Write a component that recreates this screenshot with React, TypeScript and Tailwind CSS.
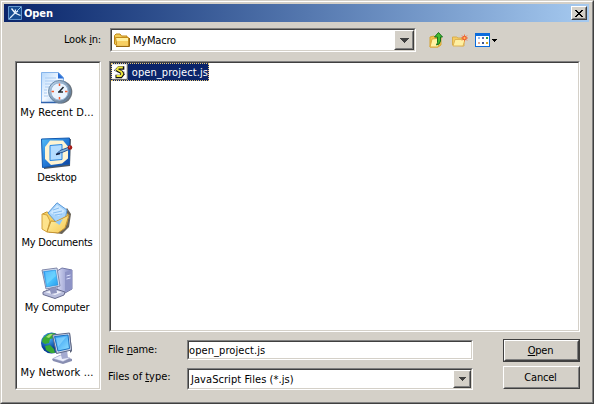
import React, { ReactNode, useState } from "react";

type Place = { label: string; icon: ReactNode; spacing: string };

function RecentIcon() {
  return (
    <svg width="33" height="32" viewBox="0 0 33 32">
      <defs>
        <linearGradient id="sheet" x1="0" y1="0" x2="1" y2="1">
          <stop offset="0" stopColor="#b5d8fc" />
          <stop offset="0.5" stopColor="#f4f9ff" />
          <stop offset="1" stopColor="#7db4ee" />
        </linearGradient>
        <linearGradient id="rim" x1="0" y1="0" x2="1" y2="1">
          <stop offset="0" stopColor="#c4dcf2" />
          <stop offset="1" stopColor="#56697f" />
        </linearGradient>
      </defs>
      <path d="M0.5 0.5h17l5 5v25H0.5z" fill="url(#sheet)" stroke="#86b4ea" />
      <path d="M17 0.5v6h6z" fill="#2b6fd6" />
      <path d="M4 6h11M4 9h12M4 12h7M4 15h4M3 18h3M3 21h3M3 24h4" stroke="#a9cbf2" />
      <path d="M0 30.5h21" stroke="#2f63ad" strokeWidth="1.5" />
      <circle cx="19.8" cy="20" r="11.5" fill="#6b737c" />
      <circle cx="18.5" cy="19.5" r="11" fill="url(#rim)" stroke="#6888a8" />
      <circle cx="18.5" cy="19.5" r="8.7" fill="#e9f4ff" stroke="#8fb2d4" />
      <path d="M18.5 11.5v2.500M18.5 25v2.500M10.500 19.500h2.500M24 19.500h2.500" stroke="#ef5b30" strokeWidth="1.500" />
      <path d="M22.500 15L18.500 19.500M22 20h-5" stroke="#202830" strokeWidth="1.500" fill="none" />
    </svg>
  );
}

function DesktopIcon() {
  return (
    <svg width="33" height="32" viewBox="0 0 33 32">
      <defs>
        <linearGradient id="desk" x1="0" y1="0" x2="1" y2="1">
          <stop offset="0" stopColor="#54bdf8" />
          <stop offset="0.5" stopColor="#247bd8" />
          <stop offset="1" stopColor="#0c3f9b" />
        </linearGradient>
      </defs>
      <path d="M3 3l27-1-1 27-26 3z" fill="#4d5865" />
      <path d="M0.500 2L28.500 1v26L1.500 30.500z" fill="url(#desk)" stroke="#1459ae" />
      <path d="M9 3.500h13l5 6v12l-6 5-11 1.500-6-6V10z" fill="#fff4d2" />
      <path d="M9 8.500l12-1v15l-12 1z" fill="#b4dcff" stroke="#2686e4" />
      <path d="M16 16.500l3-3 8-3 1 2-7 3z" fill="#81afd8" stroke="#27579b" />
      <path d="M15 17.500l4-1" stroke="#111c3c" strokeWidth="1.500" />
      <circle cx="29" cy="10.500" r="2.300" fill="#a51c18" />
      <circle cx="28.500" cy="10" r="0.700" fill="#ef7364" />
    </svg>
  );
}

function DocumentsIcon() {
  return (
    <svg width="33" height="32" viewBox="0 0 33 32">
      <defs>
        <linearGradient id="flap" x1="0" y1="0" x2="1" y2="1">
          <stop offset="0" stopColor="#fff6ae" />
          <stop offset="1" stopColor="#f6c650" />
        </linearGradient>
      </defs>
      <path d="M7 30l14 2 7-7 2-13-4-6z" fill="#6a6458" />
      <path d="M1.500 12l4-2 4 1 14-2 4 4-2 10-17 7-6-3z" fill="#f6cf60" stroke="#c09430" />
      <path d="M7 11L16 0.800 26 8l-2 10-9 2z" fill="#a8d4fb" stroke="#5b99d8" />
      <path d="M9 11l7-8 8 6-6 5z" fill="#cde8ff" />
      <path d="M12 8l6-2M12 11l9-2M14 13l7-1" stroke="#86bcf0" />
      <path d="M1 12l5 1 3 6-3 11-5-3z" fill="#fde38c" stroke="#d3a23c" />
      <path d="M6 30l4-11 5 0.500L28 13l-4 13-7 5z" fill="url(#flap)" stroke="#c69431" />
      <path d="M14 20l8-3-3.500 6z" fill="#8ec8fa" />
    </svg>
  );
}

function ComputerIcon() {
  return (
    <svg width="33" height="32" viewBox="0 0 33 32">
      <defs>
        <linearGradient id="screen" x1="0" y1="0" x2="1" y2="1">
          <stop offset="0" stopColor="#2994f4" />
          <stop offset="0.500" stopColor="#50c8ff" />
          <stop offset="1" stopColor="#259bec" />
        </linearGradient>
        <linearGradient id="tower" x1="0" y1="0" x2="1" y2="0">
          <stop offset="0" stopColor="#d6daf3" />
          <stop offset="1" stopColor="#7f86c2" />
        </linearGradient>
      </defs>
      <path d="M16 4l5-3 10 2v19l-7 4-8-3z" fill="url(#tower)" stroke="#7479a7" />
      <path d="M24 5v20l7-3V3z" fill="#8d93c6" />
      <path d="M25.500 9l4-1M25.500 12l4-1" stroke="#dce1ff" />
      <path d="M2 25l10-4 12 4-1 3-9 3.500-12-4z" fill="#b8bddb" stroke="#686d91" />
      <path d="M4 25l9-2 8 2-7 3z" fill="#eff1fb" />
      <path d="M8 20l7 0 1 6-6 1z" fill="#8e94bd" />
      <path d="M1 3L16 1l3 18-14 3z" fill="#d8e1f2" stroke="#8087a9" />
      <path d="M2.500 4.500L14.500 3l2.500 15-11.500 2z" fill="url(#screen)" stroke="#1d80d0" strokeWidth="0.500" />
      <path d="M4 5l10-1 1 5-9 8z" fill="#8addff" opacity="0.450" />
    </svg>
  );
}

function NetworkIcon() {
  return (
    <svg width="33" height="32" viewBox="0 0 33 32">
      <defs>
        <radialGradient id="globe" cx="0.350" cy="0.300">
          <stop offset="0" stopColor="#4bb6fb" />
          <stop offset="1" stopColor="#083f98" />
        </radialGradient>
        <linearGradient id="netScreen" x1="0" y1="0" x2="1" y2="1">
          <stop offset="0" stopColor="#2995f2" />
          <stop offset="1" stopColor="#91e0ff" />
        </linearGradient>
      </defs>
      <circle cx="10.500" cy="11" r="10.500" fill="url(#globe)" />
      <path d="M2 6l5-4 7-1-1 5-4 1-1 4-4 1-3-2zM4 14l5-1 4 4 1 4-4 0-5-3z" fill="#39aa35" />
      <path d="M5 5l4-3 3 0-4 4z" fill="#a3df69" />
      <path d="M11 27l8-4 12 4v2l-9 3-10-3z" fill="#888eb1" />
      <path d="M12 26.500l8-3.500 9 3-7 3.500z" fill="#eceffc" stroke="#a1a6ce" strokeWidth="0.500" />
      <path d="M19 19l7-1 1 8-6 1z" fill="#a4aad0" />
      <path d="M29 1l2 18-2 2V2z" fill="#545c72" />
      <path d="M11.500 3L28.500 1l2 17-15 3.500z" fill="#cbd7ed" stroke="#5e6887" />
      <path d="M13.500 4.500L27 3l1.500 13.500L17 19z" fill="url(#netScreen)" stroke="#1b71c1" />
      <path d="M15 6l10-1-8 10z" fill="#a2e6ff" opacity="0.500" />
    </svg>
  );
}

function FolderIcon() {
  return (
    <svg width="16" height="14" viewBox="0 0 16 14">
      <path d="M0.500 11V2.500L2 1h4l1.500 2H13v9H2z" fill="#f3cc55" stroke="#bd8414" />
      <path d="M1.500 4.500h13V13H3z" fill="#fff09f" stroke="#c48c1b" />
      <path d="M3 8h11v4.500H3z" fill="#f8cf62" />
      <path d="M2 13.500h13.500V5" stroke="#9b6810" fill="none" />
    </svg>
  );
}

function UpFolderIcon() {
  return (
    <svg width="15" height="16" viewBox="0 0 15 16">
      <path d="M1 5l4-1 1 1h6v8l-3 2H1z" fill="#f2c34a" stroke="#d4a437" />
      <path d="M1 15l2-8 9-1-3 9z" fill="#fff1a4" stroke="#dba83c" />
      <path d="M9.500 0.500l4 4.500h-2v4q-1 4-4 4 1.500-2 1-5V5H5.500z" fill="#42bd30" stroke="#16711b" />
    </svg>
  );
}

function NewFolderIcon() {
  return (
    <svg width="16" height="13" viewBox="0 0 16 13">
      <path d="M0.500 11V3h4l1.500 1h6v8z" fill="#f5cc62" stroke="#d9ad4c" />
      <path d="M1 12l2-6.500h10L11 12z" fill="#fff0a2" stroke="#deb456" />
      <path d="M12.500 0.500v7M9 4h7M10 1.500l5 5M15 1.500l-5 5" stroke="#f27943" />
      <circle cx="12.500" cy="4" r="1.700" fill="#ffc15a" stroke="#ed4b28" />
    </svg>
  );
}

function ViewIcon() {
  return (
    <svg width="22" height="14" viewBox="0 0 22 14" shapeRendering="crispEdges">
      <path d="M0 0h15v14H0z" fill="#0a6bdc" />
      <path d="M1 3h13v10H1z" fill="#fff" />
      <path d="M3 4h2v2H3z" fill="#9bbbea" />
      <path d="M7 4h2v2H7z" fill="#5c6fb4" />
      <path d="M11 4h2v2h-2z" fill="#2f9a4b" />
      <path d="M3 9h2v2H3z" fill="#e5a890" />
      <path d="M7 9h2v2H7z" fill="#3e568f" />
      <path d="M11 9h2v2h-2z" fill="#d7a928" />
      <path d="M17 6h5v1h-1v1h-1v1h-1V8h-1V7h-1z" fill="#000" />
    </svg>
  );
}

function ScriptIcon() {
  return (
    <svg width="16" height="16" viewBox="0 0 16 16">
      <path d="M0 0h16v16H0z" fill="#fff" />
      <path d="M15.500 0v15.500H0" stroke="#555" fill="none" />
      <path d="M12.500 4H7L5 6l5 2.500 1 1.500-2 2.500H3.500" stroke="#111" strokeWidth="3.600" fill="none" />
      <path d="M11 3.500H6.500L5 5.500l4.500 2.500 1 2-1.500 2H4.500" stroke="#f0e83c" strokeWidth="1.900" fill="none" />
      <path d="M3 5l1 3M5 10l3 1M12 7l1 3" stroke="#c9c9c9" />
    </svg>
  );
}

function AppIcon() {
  return (
    <svg width="14" height="14" viewBox="0 0 14 14">
      <path d="M0.500 0.500h13v13H0.500z" fill="#164c91" stroke="#6195cc" />
      <path d="M1 13L13 1" stroke="#91c2ec" fill="none" />
      <path d="M3.500 2.500l3.500 4.500 5.500 2.500M7 7l0.500-3.500" stroke="#f0f8ff" strokeWidth="1.300" fill="none" />
      <path d="M2 12l5-5 3-2" stroke="#dcecfc" strokeWidth="1.200" fill="none" />
    </svg>
  );
}

const places: Place[] = [
  { label: "My Recent D...", icon: <RecentIcon />, spacing: "tracking-[0.1px]" },
  { label: "Desktop", icon: <DesktopIcon />, spacing: "tracking-[-0.2px]" },
  { label: "My Documents", icon: <DocumentsIcon />, spacing: "tracking-[-0.25px]" },
  { label: "My Computer", icon: <ComputerIcon />, spacing: "tracking-[-0.2px]" },
  { label: "My Network ...", icon: <NetworkIcon />, spacing: "tracking-[0.1px]" },
];

const sunken =
  "border border-t-[#808080] border-l-[#808080] border-r-white border-b-white";
const sunkenInner =
  "h-full w-full bg-white border border-t-[#404040] border-l-[#404040] border-r-[#d4d0c8] border-b-[#d4d0c8]";
const raised =
  "border border-t-white border-l-white border-r-[#404040] border-b-[#404040]";
const raisedInner =
  "flex h-full w-full items-center justify-center border border-t-[#d4d0c8] border-l-[#d4d0c8] border-r-[#808080] border-b-[#808080]";

function DropButton({ big }: { big?: boolean }) {
  return (
    <button className={`h-full shrink-0 bg-[#d4d0c8] ${raised} ${big ? "w-[20px]" : "w-[18px]"}`}>
      <span className={raisedInner}>
        {big ? (
          <svg width="9" height="5" viewBox="0 0 9 5" shapeRendering="crispEdges">
            <path d="M0 0h9v1H8v1H7v1H6v1H5v1H4V4H3V3H2V2H1V1H0z" fill="#404040" />
          </svg>
        ) : (
          <svg width="7" height="4" viewBox="0 0 7 4" shapeRendering="crispEdges">
            <path d="M0 0h7v1H6v1H5v1H4v1H3V3H2V2H1V1H0z" fill="#404040" />
          </svg>
        )}
      </span>
    </button>
  );
}

function App() {
  const [fileName, setFileName] = useState("open_project.js");

  return (
    <div className="h-[404px] w-[594px] overflow-hidden border border-t-[#d4d0c8] border-l-[#d4d0c8] border-r-[#404040] border-b-[#404040] bg-[#d4d0c8] font-['DejaVu_Sans_Condensed','DejaVu_Sans',sans-serif] text-[11px] leading-[14px] tracking-[-0.2px] text-black">
      <div className="flex h-full flex-col border border-t-white border-l-white border-r-[#808080] border-b-[#808080] p-[2px]">
        {/* Title bar */}
        <div className="mr-px flex h-[18px] shrink-0 items-center bg-linear-to-r from-[#0a246a] to-[#a6caf0] pr-[2px] pl-[4px]">
          <AppIcon />
          <span className="ml-[2px] flex-1 pt-px text-[11px] font-bold tracking-[-0.1px] text-white">Open</span>
          <button className={`h-[14px] w-[16px] bg-[#d4d0c8] ${raised}`}>
            <span className={raisedInner}>
              <svg width="8" height="7" viewBox="0 0 8 7" shapeRendering="crispEdges">
                <path d="M0 0h2v1h1v1h2V1h1V0h2v1H7v1H6v1H5v1h1v1h1v1h1v1H6V6H5V5H3v1H2v1H0V6h1V5h1V4h1V3H2V2H1V1H0z" />
              </svg>
            </span>
          </button>
        </div>

        {/* Look in */}
        <div className="mt-[6px] flex h-[24px] shrink-0 items-center">
          <label className="w-[106px] pr-[9px] text-right">
            Look <u>i</u>n:
          </label>
          <div className={`h-[24px] w-[306px] ${sunken}`}>
            <div className={`flex items-center pl-[2px] ${sunkenInner}`}>
              <FolderIcon />
              <span className="ml-[3px] flex-1 pt-[2px]">MyMacro</span>
              <DropButton big />
            </div>
          </div>
          <div className="ml-[13px] flex items-center">
            <UpFolderIcon />
            <span className="ml-[8px]"><NewFolderIcon /></span>
            <span className="ml-[7px]"><ViewIcon /></span>
          </div>
        </div>

        <div className="mt-[9px] flex pl-[11px]">
          {/* Places */}
          <div className={`h-[329px] w-[86px] shrink-0 ${sunken}`}>
            <div className={`flex flex-col pt-[9px] pr-[2px] ${sunkenInner}`}>
              {places.map((place) => (
                <div key={place.label} className="flex h-[65px] shrink-0 flex-col items-center whitespace-nowrap">
                  {place.icon}
                  <span className={`mt-[2px] ${place.spacing}`}>{place.label}</span>
                </div>
              ))}
            </div>
          </div>

          <div className="ml-[8px] w-[471px]">
            <div className={`h-[271px] w-[471px] ${sunken}`}>
              <div className={sunkenInner}>
                <div className="flex h-[18px] w-[98px] items-center border border-dotted border-[#e7c979] bg-[#0a246a] text-white">
                  <ScriptIcon />
                  <span className="ml-[4px] whitespace-nowrap pt-px tracking-[0.08px]">open_project.js</span>
                </div>
              </div>
            </div>

            <div className="mt-[7px] flex">
              <div className="w-[78px]">
                <label className="-ml-px block pt-[4px]">
                  File <u>n</u>ame:
                </label>
                <label className="mt-[13px] -ml-px block tracking-[-0.03px]">
                  Files of <u>t</u>ype:
                </label>
              </div>
              <div className="w-[286px]">
                <div className={`mt-px h-[20px] ${sunken}`}>
                  <input
                    className={`block tracking-[0.08px] outline-none ${sunkenInner}`}
                    value={fileName}
                    onChange={(e) => setFileName(e.target.value)}
                  />
                </div>
                <div className={`mt-[8px] h-[22px] ${sunken}`}>
                  <div className={`flex items-center pl-[2px] ${sunkenInner}`}>
                    <span className="flex-1 pt-px tracking-[0.06px]">JavaScript Files (*.js)</span>
                    <DropButton />
                  </div>
                </div>
              </div>
              <div className="ml-[30px] w-[77px]">
                <button className="block h-[23px] w-full border border-[#404040]">
                  <span className={`block h-full ${raised}`}>
                    <span className={`pr-[2px] ${raisedInner}`}>
                      <span><u>O</u>pen</span>
                    </span>
                  </span>
                </button>
                <button className={`mt-[4px] block h-[23px] w-full ${raised}`}>
                  <span className={`pr-[2px] ${raisedInner}`}>Cancel</span>
                </button>
              </div>
            </div>
          </div>
        </div>
      </div>
    </div>
  );
}

export default App;
